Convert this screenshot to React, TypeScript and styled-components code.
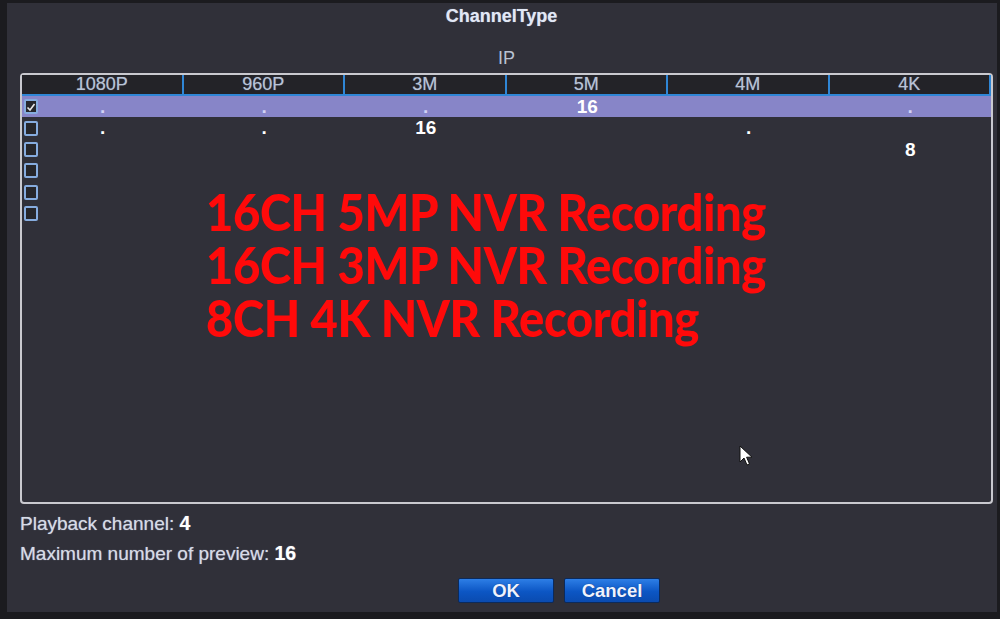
import styled, { createGlobalStyle } from "styled-components"
import { FC } from "react"

/*******************************************************/
const GlobalStyle = createGlobalStyle`
	html, body {
		margin: 0;
		padding: 0;
		background: #19191d;
	}
	body {
		font-family: "Liberation Sans", Arial, sans-serif;
	}
`

const columns = ["1080P", "960P", "3M", "5M", "4M", "4K"]

// "." is an empty slot, a number is the channel count
const rows: string[][] = [
	[".", ".", ".", "16", "", "."],
	[".", ".", "16", "", ".", ""],
	["", "", "", "", "", "8"],
	["", "", "", "", "", ""],
	["", "", "", "", "", ""],
	["", "", "", "", "", ""],
]

interface CheckProps {
	checked?: boolean
}

const CheckBox: FC<CheckProps> = ({ checked }) => (
	<Box>
		{checked && (
			<svg width="10" height="10" viewBox="0 0 10 10">
				<path d="M1.5 5.5 L4 8 L8.5 2" stroke="#e8e8e8" strokeWidth="1.6" fill="none" />
			</svg>
		)}
	</Box>
)

const Cursor: FC = () => (
	<CursorWrap>
		<svg width="14" height="22" viewBox="0 0 14 22">
			<path d="M1 1 L1 17 L5 13 L8 20 L10.5 19 L7.6 12.2 L13 12.2 Z" fill="#fff" stroke="#111" strokeWidth="1" strokeLinejoin="round" />
		</svg>
	</CursorWrap>
)

export default function App() {
	return (
		<>
			<GlobalStyle />
			<Screen>
				<Panel>
					<Title>ChannelType</Title>
					<Group>IP</Group>
					<Table>
						<HeaderRow>
							{columns.map((c) => (
								<HeaderCell key={c}>{c}</HeaderCell>
							))}
						</HeaderRow>
						<Body>
							{rows.map((row, i) => (
								<Row key={i} $selected={i === 0}>
									<CheckSlot>
										<CheckBox checked={i === 0} />
									</CheckSlot>
									{row.map((v, j) => (
										<Cell key={j} $dot={v === "."} $selected={i === 0}>
											{v}
										</Cell>
									))}
								</Row>
							))}
							<Overlay>
								<OverlayLine>16CH 5MP NVR Recording</OverlayLine>
								<OverlayLine>16CH 3MP NVR Recording</OverlayLine>
								<OverlayLine>8CH 4K NVR Recording</OverlayLine>
							</Overlay>
							<Cursor />
						</Body>
					</Table>
					<Info>
						Playback channel: <Value>4</Value>
					</Info>
					<Info>
						Maximum number of preview: <Value>16</Value>
					</Info>
					<Buttons>
						<Button>OK</Button>
						<Button>Cancel</Button>
					</Buttons>
				</Panel>
			</Screen>
		</>
	)
}

/*******************************************************/

const Screen = styled.div`
	width: 1000px;
	height: 619px;
	box-sizing: border-box;
	padding: 3px 3px 7px 7px;
	background: #1b1b1f;
	overflow: hidden;
`

const Panel = styled.div`
	display: flex;
	flex-direction: column;
	height: 100%;
	box-sizing: border-box;
	padding: 0 4px 0 13px;
	background: #303039;
`

const Title = styled.div`
	flex-shrink: 0;
	height: 26px;
	line-height: 26px;
	padding-right: 10px;
	text-align: center;
	font-size: 18px;
	font-weight: 700;
	color: #e2e8f5;
	text-shadow: 0 0 1px #8896b0;
`

const Group = styled.div`
	flex-shrink: 0;
	margin-top: 19px;
	height: 20px;
	line-height: 20px;
	text-align: center;
	font-size: 18px;
	color: #b9c2d2;
`

const Table = styled.div`
	flex-shrink: 0;
	margin-top: 5px;
	height: 431px;
	box-sizing: border-box;
	border: 2px solid #c9c9cf;
	border-radius: 4px;
	display: flex;
	flex-direction: column;
	background: #303039;
`

const HeaderRow = styled.div`
	display: grid;
	grid-template-columns: repeat(6, 1fr);
	height: 19px;
	background: #232328;
	border-bottom: 2px solid #2f86d6;
`

const HeaderCell = styled.div`
	text-align: center;
	line-height: 19px;
	font-size: 18px;
	color: #b8c3d6;
	border-right: 2px solid #2f86d6;
	text-shadow: 0 0 1px #6d7890;
`

const Body = styled.div`
	position: relative;
	flex: 1;
`

const Row = styled.div<{ $selected?: boolean }>`
	position: relative;
	display: grid;
	grid-template-columns: repeat(6, 1fr);
	height: 21.4px;
	background: ${(p) => (p.$selected ? "#8785c8" : "transparent")};
`

const CheckSlot = styled.div`
	position: absolute;
	left: 2px;
	top: 0;
	height: 100%;
	display: flex;
	align-items: center;
`

const Box = styled.div`
	width: 10px;
	height: 11px;
	border: 2px solid #86acdf;
	border-radius: 2px;
	background: #26262b;
	display: flex;
	align-items: center;
	justify-content: center;
`

const Cell = styled.div<{ $dot?: boolean; $selected?: boolean }>`
	text-align: center;
	font-size: 19px;
	font-weight: 700;
	line-height: 21px;
	color: ${(p) => (p.$dot && p.$selected ? "#d2d2f4" : "#ffffff")};
`

const Overlay = styled.div`
	position: absolute;
	left: 184px;
	top: 89px;
	display: flex;
	flex-direction: column;
	pointer-events: none;
	transform: scaleX(0.927);
	transform-origin: left top;
`

const OverlayLine = styled.div`
	font-family: Lato, "Open Sans", sans-serif;
	font-weight: 900;
	font-size: 51px;
	line-height: 53px;
	color: #ff0a0a;
	letter-spacing: -0.5px;
	white-space: nowrap;
`

const CursorWrap = styled.div`
	position: absolute;
	left: 717px;
	top: 349px;
`

const Info = styled.div`
	flex-shrink: 0;
	margin-top: 8px;
	height: 22px;
	line-height: 22px;
	font-size: 19px;
	color: #d7dbe6;
	text-shadow: 0 0 1px #9aa2b4;
	&:first-of-type {
		margin-top: 10px;
	}
`

const Value = styled.span`
	font-weight: 700;
	color: #ffffff;
	font-size: 19.5px;
`

const Buttons = styled.div`
	display: flex;
	gap: 10px;
	margin-top: 14px;
	margin-left: 438px;
`

const Button = styled.button`
	width: 96px;
	height: 25px;
	border: 1px solid #0b2a5c;
	border-radius: 2px;
	background: linear-gradient(#2d7ee6, #0c56c4 55%, #0a4bb0);
	color: #eef3ff;
	font-family: "Liberation Sans", Arial, sans-serif;
	font-size: 18.5px;
	font-weight: 700;
	line-height: 23px;
	padding: 0;
	text-shadow: 0 0 1px #0a2a6a;
`
